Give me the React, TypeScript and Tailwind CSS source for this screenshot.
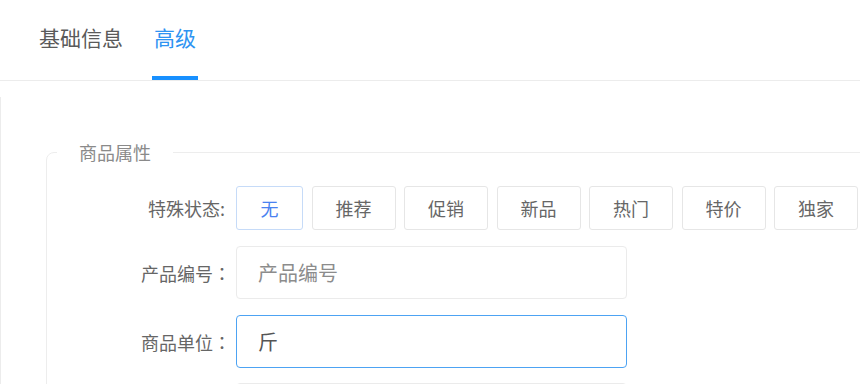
import React from "react";

const font = { fontFamily: '"Noto Sans CJK SC", "Noto Sans", sans-serif' };

function Colon() {
  return <span className="[font-family:'Noto_Sans_CJK_TC',sans-serif]">：</span>;
}

export default function App() {
  const tags = ["推荐", "促销", "新品", "热门", "特价", "独家"];
  return (
    <div className="w-[860px] h-[384px] overflow-hidden bg-white font-['Noto_Sans_CJK_SC','Noto_Sans',sans-serif]" style={font}>
      {/* tabs */}
      <div className="h-[81px] border-b border-[#ececec] flex items-stretch pl-[39px] gap-[29px]">
        <div className="h-[80px] flex items-center border-b-4 border-transparent pb-[2px] text-[21px] leading-[28px] text-[#5a5a5a]">
          基础信息
        </div>
        <div className="h-[80px] w-[46px] flex items-center justify-center border-b-4 border-[#1890ff] pb-[2px] text-[21px] leading-[28px] text-[#2e93f2]">
          高级
        </div>
      </div>

      {/* content */}
      <div className="mt-[16px] border-l border-[#ececec] h-[400px] pt-[44px]">
        <fieldset className="ml-[45px] w-[900px] border border-[#ededed] rounded-[8px] pt-[22px]">
          <legend className="ml-[10px] px-[22px] text-[18px] leading-[22px] text-[#8a8a8a]">商品属性</legend>

          <div className="flex items-center h-[44px] mt-[1px]">
            <div className="w-[189px] pr-[11px] text-right text-[18px] leading-[24px] text-[#666]">特殊状态:</div>
            <div className="flex gap-[8.5px]">
              <div className="w-[67px] h-[44px] flex items-center justify-center border border-[#c6dbf8] rounded-[3px] text-[18px] text-[#4a82f0]">
                无
              </div>
              {tags.map((t) => (
                <div
                  key={t}
                  className="w-[84px] h-[44px] flex items-center justify-center border border-[#e6e6e6] rounded-[3px] text-[18px] text-[#666]"
                >
                  {t}
                </div>
              ))}
            </div>
          </div>

          <div className="flex items-center h-[53px] mt-[16px]">
            <div className="w-[189px] pr-[5px] text-right text-[18px] leading-[24px] text-[#666]">
              产品编号<Colon />
            </div>
            <input
              readOnly
              placeholder="产品编号"
              className="w-[391px] h-[53px] border border-[#ebebeb] rounded-[4px] pl-[21px] text-[20px] text-[#555] placeholder:text-[#8c8c8c] outline-none"
            />
          </div>

          <div className="flex items-center h-[53px] mt-[16px]">
            <div className="w-[189px] pr-[5px] text-right text-[18px] leading-[24px] text-[#666]">
              商品单位<Colon />
            </div>
            <input
              readOnly
              value="斤"
              className="w-[391px] h-[53px] border border-[#4da3f3] rounded-[4px] pl-[21px] text-[20px] text-[#555] outline-none"
            />
          </div>

          <div className="flex items-center h-[53px] mt-[15px] mb-[20px]">
            <div className="w-[189px]" />
            <div className="w-[391px] h-[53px] border border-[#ebebeb] rounded-[4px]" />
          </div>
        </fieldset>
      </div>
    </div>
  );
}
